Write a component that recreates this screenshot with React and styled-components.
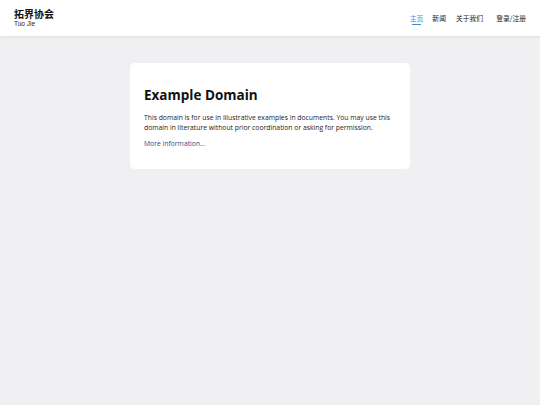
import styled, { createGlobalStyle } from "styled-components";

const GlobalStyle = createGlobalStyle`
  html, body {
    margin: 0;
    padding: 0;
    background: #f0f0f2;
    font-family: "Open Sans", "Noto Sans", "Noto Sans CJK SC", sans-serif;
  }
`;

const Page = styled.div`
  min-height: 405px;
  background: #f0f0f2;
`;

const Header = styled.header`
  height: 36px;
  background: #fff;
  box-shadow: 0 1px 3px rgba(0, 0, 0, 0.08);
  display: flex;
  align-items: center;
  justify-content: space-between;
  padding: 0 14px;
  box-sizing: border-box;
`;

const Brand = styled.div`
  display: flex;
  flex-direction: column;
  line-height: 1;
`;

const BrandName = styled.span`
  font-family: "Noto Sans CJK SC", sans-serif;
  font-weight: 700;
  font-size: 10px;
  color: #111;
`;

const BrandSub = styled.span`
  font-family: "Liberation Sans", Arial, sans-serif;
  font-size: 6.5px;
  color: #222;
  margin-top: 2px;
`;

const Nav = styled.nav`
  display: flex;
  align-items: center;
`;

const NavItem = styled.a`
  position: relative;
  font-family: "Noto Sans CJK SC", sans-serif;
  font-size: 6.8px;
  line-height: 1;
  color: ${(p) => (p.active ? "#3b8fd9" : "#222")};
  text-decoration: none;
  margin-left: ${(p) => p.gap || 0}px;

  &::after {
    content: "";
    display: ${(p) => (p.active ? "block" : "none")};
    position: absolute;
    left: 2px;
    right: 2px;
    bottom: -4px;
    height: 1px;
    background: #3b8fd9;
  }
`;

const Card = styled.main`
  width: 280px;
  margin: 27px auto 0;
  background: #fff;
  border-radius: 5px;
  padding: 22px 14px 20px;
  box-sizing: border-box;
`;

const Title = styled.h1`
  margin: 0 0 8px;
  font-size: 13.5px;
  line-height: 20px;
  font-weight: 700;
  color: #111;
`;

const Text = styled.p`
  margin: 0 0 6px;
  font-size: 6.8px;
  line-height: 10px;
  color: #222;
`;

const Link = styled.a`
  display: block;
  font-size: 6.8px;
  line-height: 10px;
  color: #38488f;
  text-decoration: none;
`;

export default function App() {
  return (
    <Page>
      <GlobalStyle />
      <Header>
        <Brand>
          <BrandName>拓界协会</BrandName>
          <BrandSub>Tuo Jie</BrandSub>
        </Brand>
        <Nav>
          <NavItem active>主页</NavItem>
          <NavItem gap={9}>新闻</NavItem>
          <NavItem gap={10}>关于我们</NavItem>
          <NavItem gap={13}>登录/注册</NavItem>
        </Nav>
      </Header>
      <Card>
        <Title>Example Domain</Title>
        <Text>
          This domain is for use in illustrative examples in documents. You may use this
          domain in literature without prior coordination or asking for permission.
        </Text>
        <Link href="#">More information...</Link>
      </Card>
    </Page>
  );
}
